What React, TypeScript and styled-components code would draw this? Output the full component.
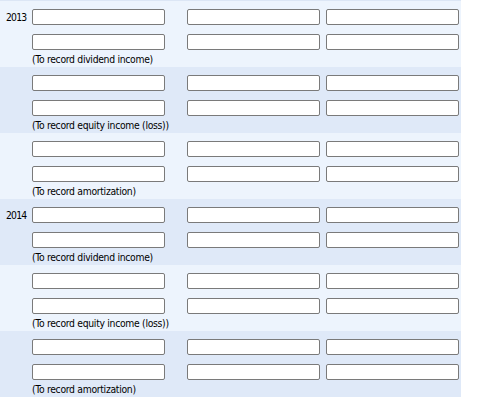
import React from "react";
import styled, { createGlobalStyle } from "styled-components";

const Global = createGlobalStyle`
  html, body { margin: 0; padding: 0; background: #ffffff; }
  body { font-family: "DejaVu Sans Condensed", "DejaVu Sans", sans-serif; }
`;

const Panel = styled.div`
  width: 461px;
  border-top: 1px solid #dce6f5;
`;

const Band = styled.div<{ $shade: boolean }>`
  box-sizing: border-box;
  height: 66px;
  padding-top: 8px;
  background: ${(p) => (p.$shade ? "#dfe9f8" : "#edf4fd")};
  display: grid;
  grid-template-columns: 26px 149px 133px 133px;
  grid-template-rows: 16px 16px auto;
  row-gap: 9px;
  column-gap: 6px;
  align-content: start;
`;

const Year = styled.div`
  grid-column: 1;
  grid-row: 1;
  padding-left: 6px;
  font-size: 10.3px;
  font-stretch: condensed;
  letter-spacing: -0.8px;
  line-height: 16px;
  color: #000;
`;

const Field = styled.input.attrs({ type: "text" })<{ $col: number; $row: number }>`
  grid-column: ${(p) => p.$col};
  grid-row: ${(p) => p.$row};
  box-sizing: border-box;
  width: 133px;
  height: 16px;
  margin: 0;
  padding: 0 3px;
  border: 1px solid #7a7a7a;
  border-radius: 2px;
  background: #ffffff;
  outline: none;
`;

const Caption = styled.div`
  grid-column: 2 / 5;
  grid-row: 3;
  margin-top: -6px;
  font-size: 10.3px;
  font-stretch: condensed;
  letter-spacing: -0.3px;
  line-height: 13px;
  color: #000;
  white-space: nowrap;
`;

const entries = [
  { year: "2013", caption: "(To record dividend income)" },
  { caption: "(To record equity income (loss))" },
  { caption: "(To record amortization)" },
  { year: "2014", caption: "(To record dividend income)" },
  { caption: "(To record equity income (loss))" },
  { caption: "(To record amortization)" },
];

export default function App() {
  return (
    <>
      <Global />
      <Panel>
        {entries.map((e, i) => (
          <Band key={i} $shade={i % 2 === 1}>
            {e.year && <Year>{e.year}</Year>}
            {[1, 2].map((row) =>
              [2, 3, 4].map((col) => (
                <Field key={`${row}-${col}`} $row={row} $col={col} />
              ))
            )}
            <Caption>{e.caption}</Caption>
          </Band>
        ))}
      </Panel>
    </>
  );
}
